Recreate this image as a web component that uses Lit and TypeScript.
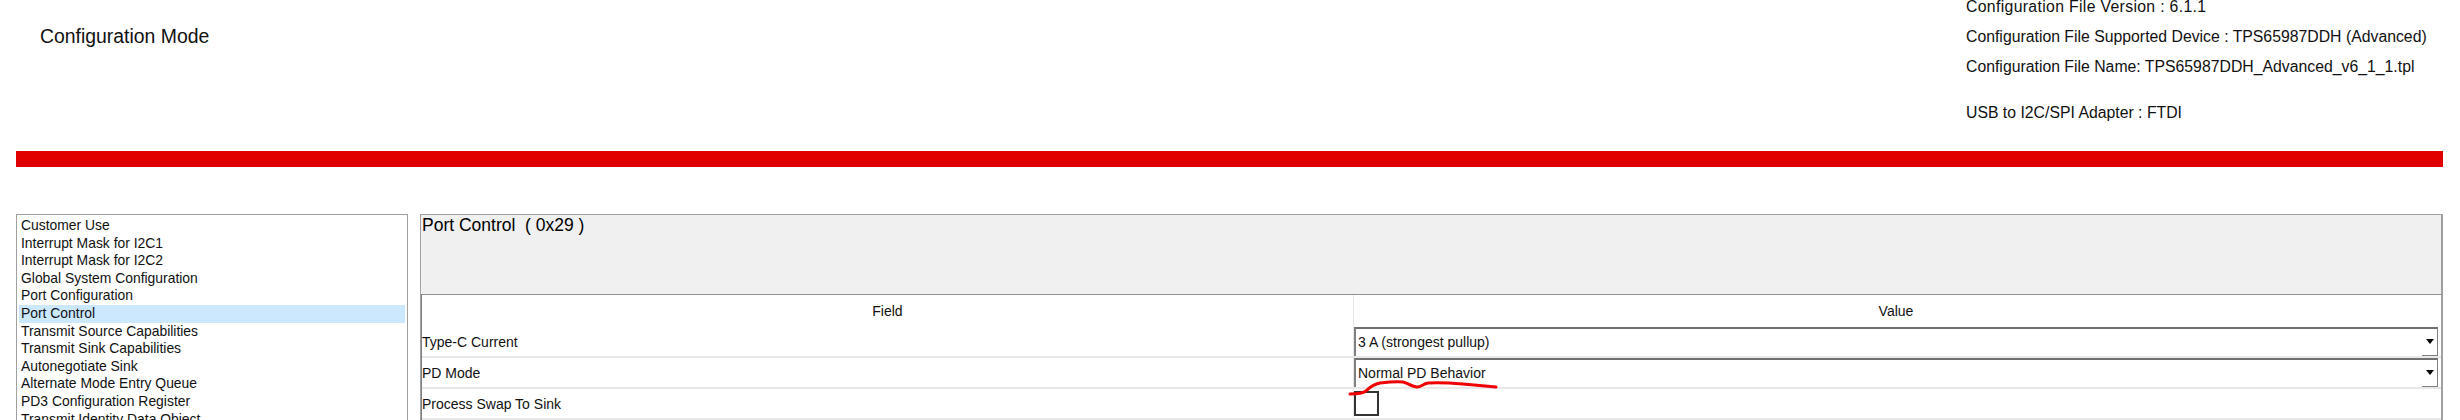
import { LitElement, html, css } from "lit";
import { customElement } from "lit/decorators.js";

const ITEMS = [
  "Customer Use",
  "Interrupt Mask for I2C1",
  "Interrupt Mask for I2C2",
  "Global System Configuration",
  "Port Configuration",
  "Port Control",
  "Transmit Source Capabilities",
  "Transmit Sink Capabilities",
  "Autonegotiate Sink",
  "Alternate Mode Entry Queue",
  "PD3 Configuration Register",
  "Transmit Identity Data Object",
];

@customElement("app-root")
export class AppRoot extends LitElement {
  static styles = css`
    :host {
      display: block;
      width: 2460px;
      height: 420px;
      overflow: hidden;
      background: #fff;
      font-family: "Liberation Sans", Arial, sans-serif;
      color: #111;
    }
    .top {
      display: flex;
      justify-content: space-between;
      height: 151px;
      padding: 0 0 0 40px;
    }
    .title {
      font-size: 19.4px;
      line-height: 22px;
      margin-top: 25px;
    }
    .info {
      width: 494px;
      margin-top: -8px;
      font-size: 15.8px;
      line-height: 30px;
    }
    .wide {
      letter-spacing: 0.33px;
    }
    .gap {
      height: 16px;
    }
    .bar {
      height: 16px;
      margin: 0 17px 0 16px;
      background: #e00000;
    }
    .main {
      display: flex;
      gap: 12px;
      margin: 47px 17px 0 16px;
      height: 220px;
    }
    .list {
      box-sizing: border-box;
      width: 392px;
      flex: none;
      border: 1px solid #a0a0a0;
      border-bottom: none;
      padding: 2px 2px 0;
      font-size: 13.9px;
      line-height: 17.6px;
      overflow: hidden;
    }
    .item {
      padding-left: 2px;
      height: 17.6px;
      white-space: nowrap;
    }
    .item.sel {
      background: #cce8ff;
    }
    .panel {
      flex: 1;
      border: 1px solid #a0a0a0;
      border-bottom: none;
      border-right-width: 2px;
      display: flex;
      flex-direction: column;
      min-width: 0;
    }
    .head {
      height: 79px;
      background: #f0f0f0;
      font-size: 17.5px;
      line-height: 21px;
      padding: 0 0 0 1px;
      box-sizing: border-box;
      white-space: pre;
      color: #000;
    }
    .table {
      border-top: 1px solid #909090;
      border-left: 1px solid #808080;
      font-size: 14px;
    }
    .row {
      display: grid;
      grid-template-columns: 931px 1fr;
      align-items: center;
      height: 31px;
      border-bottom: 2px solid #e8e8e8;
      box-sizing: border-box;
    }
    .row.hdr {
      height: 32px;
      border-bottom: none;
      text-align: center;
    }
    .cell {
      height: 100%;
      display: flex;
      align-items: center;
      min-width: 0;
    }
    .value {
      border-left: 1px solid #e8e8e8;
      padding: 0 3px 0 0;
      box-sizing: border-box;
    }
    .hdr .cell {
      justify-content: center;
    }
    .select {
      box-sizing: border-box;
      flex: 1;
      height: 29px;
      border-style: solid;
      border-color: #707070 #808080 transparent #808080;
      border-width: 2px 1px 0 2px;
      display: flex;
      align-items: center;
      justify-content: space-between;
      padding: 0 3px 2px 2px;
      position: relative;
    }
    .select::after {
      content: "";
      position: absolute;
      right: 0;
      bottom: 0;
      width: 15px;
      height: 1px;
      background: #808080;
    }
    .arrow {
      width: 0;
      height: 0;
      border-left: 4px solid transparent;
      border-right: 4px solid transparent;
      border-top: 5px solid #000;
    }
    .check {
      box-sizing: border-box;
      width: 25px;
      height: 25px;
      border: 2px solid #333;
    }
    .ink {
      position: absolute;
      left: 1340px;
      top: 376px;
      pointer-events: none;
    }
  `;

  render() {
    return html`
      <div class="top">
        <div class="title">Configuration Mode</div>
        <div class="info">
          <div class="wide">Configuration File Version : 6.1.1</div>
          <div>Configuration File Supported Device : TPS65987DDH (Advanced)</div>
          <div>Configuration File Name: TPS65987DDH_Advanced_v6_1_1.tpl</div>
          <div class="gap"></div>
          <div>USB to I2C/SPI Adapter : FTDI</div>
        </div>
      </div>
      <div class="bar"></div>
      <div class="main">
        <div class="list">
          ${ITEMS.map(
            (t) => html`<div class="item ${t === "Port Control" ? "sel" : ""}">${t}</div>`
          )}
        </div>
        <div class="panel">
          <div class="head">Port Control  ( 0x29 )</div>
          <div class="table">
            <div class="row hdr">
              <div class="cell">Field</div>
              <div class="cell value">Value</div>
            </div>
            <div class="row">
              <div class="cell">Type-C Current</div>
              <div class="cell value">
                <div class="select"><span>3 A (strongest pullup)</span><span class="arrow"></span></div>
              </div>
            </div>
            <div class="row">
              <div class="cell">PD Mode</div>
              <div class="cell value">
                <div class="select"><span>Normal PD Behavior</span><span class="arrow"></span></div>
              </div>
            </div>
            <div class="row">
              <div class="cell">Process Swap To Sink</div>
              <div class="cell value"><div class="check"></div></div>
            </div>
          </div>
        </div>
      </div>
      <svg class="ink" width="170" height="30" viewBox="0 0 170 30">
        <path
          d="M10 18 C16 18 22 18 26 15 C30 11 34 8 40 7 C48 6 56 5 63 6 C68 7 72 11 77 11 C81 11 83 8 88 7 C100 6 112 7 123 8 C134 9 145 10 156 11"
          fill="none"
          stroke="#f00000"
          stroke-width="3"
          stroke-linecap="round"
        />
      </svg>
    `;
  }
}
